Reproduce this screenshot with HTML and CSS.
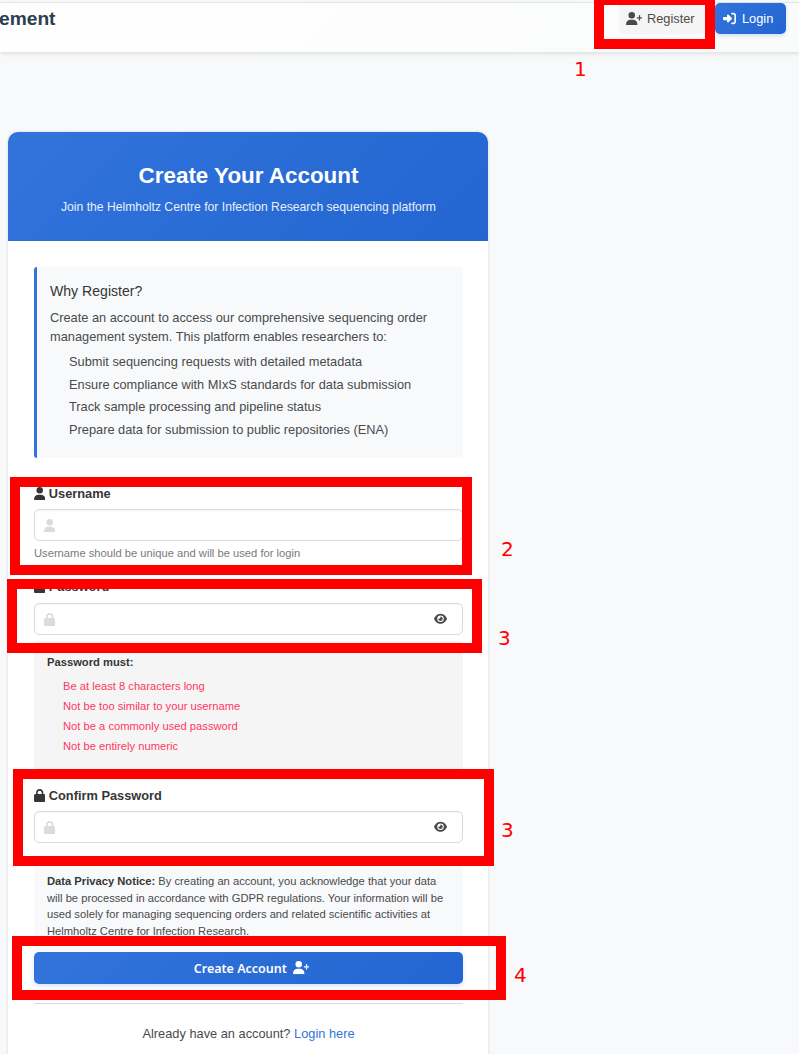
FILE: index.html
```html
<!DOCTYPE html>
<html lang="en">
<head>
<meta charset="utf-8">
<title>Create Your Account</title>
<link rel="stylesheet" href="styles.css">
</head>
<body>
<svg class="sprite" aria-hidden="true">
<symbol id="user" viewBox="0 0 448 512"><path d="M224 256A128 128 0 1 0 224 0a128 128 0 1 0 0 256zm-45.700 48C79.800 304 0 383.800 0 482.300C0 498.700 13.300 512 29.700 512H418.300c16.400 0 29.700-13.300 29.700-29.700C448 383.800 368.200 304 269.700 304H178.300z"/></symbol>
<symbol id="lock" viewBox="0 0 448 512"><path d="M144 144v48H304V144c0-44.200-35.800-80-80-80s-80 35.800-80 80zM80 192V144C80 64.500 144.500 0 224 0s144 64.500 144 144v48h16c35.300 0 64 28.700 64 64V448c0 35.300-28.700 64-64 64H64c-35.300 0-64-28.700-64-64V256c0-35.300 28.700-64 64-64H80z"/></symbol>
<symbol id="user-plus" viewBox="0 0 640 512"><path d="M96 128a128 128 0 1 1 256 0A128 128 0 1 1 96 128zM0 482.300C0 383.800 79.800 304 178.300 304h91.400C368.200 304 448 383.800 448 482.300c0 16.400-13.300 29.700-29.700 29.700H29.700C13.300 512 0 498.700 0 482.300zM504 312V248H440c-13.300 0-24-10.700-24-24s10.700-24 24-24h64V136c0-13.300 10.700-24 24-24s24 10.700 24 24v64h64c13.300 0 24 10.700 24 24s-10.700 24-24 24H552v64c0 13.300-10.700 24-24 24s-24-10.700-24-24z"/></symbol>
<symbol id="sign-in" viewBox="0 0 512 512"><path d="M217.900 105.900L340.700 228.700c7.200 7.200 11.300 17.100 11.300 27.300s-4.100 20.100-11.300 27.300L217.900 406.100c-6.400 6.400-15 9.900-24 9.900c-18.700 0-33.900-15.200-33.900-33.900l0-62.100L32 320c-17.700 0-32-14.300-32-32l0-64c0-17.700 14.300-32 32-32l128 0 0-62.100c0-18.700 15.200-33.900 33.900-33.900c9 0 17.600 3.600 24 9.900zM352 416l64 0c17.700 0 32-14.300 32-32l0-256c0-17.700-14.300-32-32-32l-64 0c-17.700 0-32-14.300-32-32s14.300-32 32-32l64 0c53 0 96 43 96 96l0 256c0 53-43 96-96 96l-64 0c-17.700 0-32-14.300-32-32s14.300-32 32-32z"/></symbol>
<symbol id="eye" viewBox="0 0 576 512"><path d="M288 32c-80.800 0-145.500 36.800-192.600 80.600C48.600 156 17.300 208 2.500 243.700c-3.300 7.900-3.300 16.700 0 24.600C17.300 304 48.600 356 95.400 399.400C142.500 443.200 207.200 480 288 480s145.500-36.800 192.600-80.600c46.800-43.500 78.100-95.400 93-131.100c3.300-7.900 3.300-16.700 0-24.600c-14.900-35.700-46.200-87.700-93-131.100C433.500 68.800 368.800 32 288 32zM144 256a144 144 0 1 1 288 0 144 144 0 1 1 -288 0zm144-64c0 35.300-28.700 64-64 64c-7.100 0-13.900-1.200-20.300-3.300c-5.500-1.800-11.900 1.600-11.700 7.400c.3 6.900 1.300 13.800 3.200 20.700c13.700 51.200 66.400 81.600 117.600 67.900s81.600-66.400 67.900-117.600c-11.100-41.500-47.800-69.400-88.600-71.100c-5.800-.2-9.200 6.100-7.400 11.700c2.100 6.400 3.300 13.200 3.300 20.300z"/></symbol>
</svg>

<header class="navbar">
  <span class="brand">ement</span>
  <nav class="nav-actions">
    <a class="nav-btn light"><svg class="icon wide"><use href="#user-plus"/></svg>Register</a>
    <a class="nav-btn primary"><svg class="icon sq"><use href="#sign-in"/></svg>Login</a>
  </nav>
</header>

<main class="card">
  <div class="card-head">
    <h1>Create Your Account</h1>
    <p>Join the Helmholtz Centre for Infection Research sequencing platform</p>
  </div>
  <div class="card-body">
    <section class="why">
      <h2>Why Register?</h2>
      <p>Create an account to access our comprehensive sequencing order management system. This platform enables researchers to:</p>
      <ul>
        <li>Submit sequencing requests with detailed metadata</li>
        <li>Ensure compliance with MIxS standards for data submission</li>
        <li>Track sample processing and pipeline status</li>
        <li>Prepare data for submission to public repositories (ENA)</li>
      </ul>
    </section>

    <div class="field">
      <label class="label"><svg class="icon"><use href="#user"/></svg>Username</label>
      <div class="input"><svg class="icon faint"><use href="#user"/></svg></div>
      <p class="help">Username should be unique and will be used for login</p>
    </div>

    <div class="field password">
      <label class="label"><svg class="icon"><use href="#lock"/></svg>Password</label>
      <div class="input"><svg class="icon faint"><use href="#lock"/></svg><svg class="icon eye"><use href="#eye"/></svg></div>
    </div>

    <div class="rules">
      <strong>Password must:</strong>
      <ul>
        <li>Be at least 8 characters long</li>
        <li>Not be too similar to your username</li>
        <li>Not be a commonly used password</li>
        <li>Not be entirely numeric</li>
      </ul>
    </div>

    <div class="field confirm">
      <label class="label"><svg class="icon"><use href="#lock"/></svg>Confirm Password</label>
      <div class="input"><svg class="icon faint"><use href="#lock"/></svg><svg class="icon eye"><use href="#eye"/></svg></div>
    </div>

    <p class="privacy"><strong>Data Privacy Notice:</strong> By creating an account, you acknowledge that your data will be processed in accordance with GDPR regulations. Your information will be used solely for managing sequencing orders and related scientific activities at Helmholtz Centre for Infection Research.</p>

    <button class="submit">Create Account<svg class="icon wide"><use href="#user-plus"/></svg></button>

    <p class="signin">Already have an account? <a>Login here</a></p>
  </div>
</main>

<div class="mark m1"></div><span class="num n1">1</span>
<div class="mark m2"></div><span class="num n2">2</span>
<div class="mark m3"></div><span class="num n3">3</span>
<div class="mark m4"></div><span class="num n4">3</span>
<div class="mark m5"></div><span class="num n5">4</span>
</body>
</html>
```
FILE: styles.css
```css
* { box-sizing: border-box; margin: 0; padding: 0; }

body {
  position: relative;
  height: 1054px;
  overflow: hidden;
  background: #f8f9fb;
  color: #4a4a4a;
  font: 12.8px/19.2px "Liberation Sans", Arial, sans-serif;
}

ul { list-style: none; }
.sprite { display: none; }

.icon { width: 11.4px; height: 13px; fill: currentColor; flex: none; }
.icon.wide { width: 16.4px; height: 13.2px; }
.icon.sq { width: 13px; }

/* Top bar */
.navbar {
  display: flex;
  justify-content: space-between;
  height: 50px;
  margin-top: 2px;
  padding-right: 13px;
  border-top: 1px solid #e4e5e6;
  background: linear-gradient(135deg, #fff 0%, #fafbfb 100%);
  box-shadow: 0 2px 4px rgba(10, 10, 10, .1);
}
.brand { margin-left: -1px; font-size: 19.2px; line-height: 31px; font-weight: 700; color: #2c3e50; }
.nav-actions { display: flex; gap: 6px; }
.nav-btn {
  display: flex;
  align-items: center;
  height: 31px;
  border-radius: 0 0 5px 5px;
}
.nav-btn.light { width: 90px; padding-left: 7px; gap: 4.6px; background: #f5f5f5; color: #4a4a4a; }
.nav-btn.primary {
  width: 71px;
  padding-left: 8px;
  gap: 6px;
  border-radius: 5px;
  color: #fff;
  background: linear-gradient(135deg, #3273dc, #2366d1);
  box-shadow: 0 2px 4px rgba(50, 115, 220, .2);
}

/* Registration card */
.card {
  width: 480px;
  height: 960px;
  margin: 80px 0 0 8px;
  border-radius: 10px;
  background: #fff;
  box-shadow: 0 0 3px rgba(10, 10, 10, .16);
}
.card-head {
  height: 109px;
  padding: 30px 0 0 1px;
  border-radius: 10px 10px 0 0;
  background: linear-gradient(135deg, #3273dc, #2366d1);
  color: #fff;
  text-align: center;
}
.card-head h1 { font-size: 22.4px; line-height: 28px; }
.card-head p { margin-top: 8px; font-size: 12.16px; opacity: .9; }
.card-body { padding: 26px 25px 0 26px; }

.why {
  height: 191px;
  padding: 14px 13px 0;
  border-left: 3px solid #3273dc;
  border-radius: 3px;
  background: #f8f9fb;
}
.why h2 { font-size: 14.08px; line-height: 20px; font-weight: 400; color: #363636; }
.why p { margin-top: 7px; }
.why ul { margin: 5px 0 0 19px; }
.why li { line-height: 22.5px; }

.field { margin-top: 26px; }
.label {
  display: flex;
  align-items: center;
  gap: 3.4px;
  height: 19px;
  font-weight: 700;
  color: #363636;
}
.input {
  display: flex;
  align-items: center;
  justify-content: space-between;
  height: 32px;
  margin-top: 6px;
  padding: 0 15px 0 9px;
  border: 1px solid #dbdbdb;
  border-radius: 5px;
  background: #fff;
  box-shadow: inset 0 1px 2px rgba(10, 10, 10, .05);
}
.faint { color: #dbdbdb; }
.icon.eye { width: 13px; height: 11.5px; }
.help { margin-top: 4px; font-size: 11.2px; line-height: 17px; color: #7a7a7a; }
.password { margin-top: 15px; }
.password .input { margin-top: 7px; }

.rules {
  height: 128px;
  margin-top: 6px;
  padding: 13px 13px 0;
  border-radius: 3px;
  background: #f5f5f5;
  font-size: 11.2px;
  line-height: 16px;
}
.rules strong { display: block; color: #363636; }
.rules ul { margin: 6px 0 0 16px; color: #ff3860; }
.rules li { line-height: 20px; }
.confirm { margin-top: 17px; }

.privacy {
  height: 91px;
  margin-top: 17px;
  padding: 13px 13px 0;
  border-radius: 3px;
  background: #f8f9fb;
  font-size: 11.2px;
  line-height: 16.6px;
}
.privacy strong { color: #363636; }

.submit {
  display: flex;
  align-items: center;
  justify-content: center;
  gap: 6px;
  width: 100%;
  height: 32px;
  margin-top: 1px;
  padding-left: 6px;
  border: 0;
  border-radius: 5px;
  background: linear-gradient(135deg, #3273dc, #2366d1);
  box-shadow: 0 2px 4px rgba(50, 115, 220, .2);
  color: #fff;
  font: 600 12.5px/19px "Noto Sans", "Open Sans", sans-serif;
}
.signin {
  margin-top: 19px;
  padding-top: 20px;
  border-top: 1px solid #dbdbdb;
  text-align: center;
}
.signin a { color: #3273dc; }

/* Numbered callouts over the page */
.mark { position: absolute; border: 10px solid #f00; }
.m1 { left: 594px; top: -5px; width: 121px; height: 54px; }
.m2 { left: 10px; top: 477px; width: 462px; height: 98px; }
.m3 { left: 7px; top: 579px; width: 475px; height: 74px; }
.m4 { left: 13px; top: 769px; width: 481px; height: 97px; }
.m5 { left: 12px; top: 936px; width: 494px; height: 64px; }
.num { position: absolute; color: #f00; font: 20px/24px "DejaVu Sans", sans-serif; }
.n1 { left: 574px; top: 57px; }
.n2 { left: 501px; top: 537px; }
.n3 { left: 498px; top: 626px; }
.n4 { left: 501px; top: 818px; }
.n5 { left: 514px; top: 963px; }
```
